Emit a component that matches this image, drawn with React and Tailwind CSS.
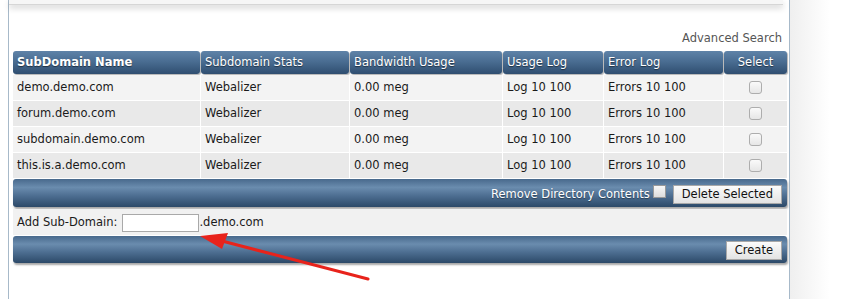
const rows = [
  "demo.demo.com",
  "forum.demo.com",
  "subdomain.demo.com",
  "this.is.a.demo.com",
];

const cols = "grid grid-cols-[187px_148px_152px_100px_119px_63px] gap-x-px";

const bar =
  "rounded-[3px] bg-[linear-gradient(to_bottom,#48698c_0%,#6a8cae_30%,#4d6e91_60%,#2c4968_100%)] shadow-[1px_2px_2px_rgba(0,0,0,0.35)]";

const head =
  "h-[23px] flex items-center px-1 rounded-[3px] text-white [text-shadow:0_1px_1px_rgba(0,0,0,0.5)] bg-[linear-gradient(to_bottom,#5f83a8_0%,#4a6d92_45%,#2f4e70_100%)] shadow-[1px_1px_1px_rgba(0,0,0,0.3)]";

function Box() {
  return (
    <span className="inline-block w-[13px] h-[13px] rounded-[3px] border border-[#adadad] bg-[linear-gradient(to_bottom,#fafafa,#e6e6e6)]" />
  );
}

function Btn({ children }) {
  return (
    <button className="h-[19px] px-2 border border-[#a8a8a8] bg-[linear-gradient(to_bottom,#fbfbfb,#e3e3e3)] text-[11.5px] text-[#111] leading-none">
      {children}
    </button>
  );
}

export default function App() {
  return (
    <div className="relative w-[856px] h-[299px] bg-white overflow-hidden font-['DejaVu_Sans',Verdana,sans-serif] text-[11.5px] text-[#1a1a1a]">
      {/* panel shadow on the right */}
      <div className="absolute left-[790px] top-0 w-[40px] h-full bg-[linear-gradient(to_right,#efefef,#ffffff)]" />

      <div className="absolute left-[8px] top-0 w-[782px] h-full border-x border-[#a7b9c9] bg-white">
        {/* top box with shadow */}
        <div className="h-[5px] mr-[6px] bg-[#f6f6f6] border-b border-[#d6d6d6] shadow-[0_3px_6px_rgba(0,0,0,0.18)]" />

        <div className="pl-[4px] pr-[2px]">
          <div className="h-[46px] flex items-end justify-end pr-[5px] pb-[4px] text-[#555]">
            Advanced Search
          </div>

          <div className={cols}>
            <div className={head + " font-bold"}>SubDomain Name</div>
            <div className={head}>Subdomain Stats</div>
            <div className={head}>Bandwidth Usage</div>
            <div className={head}>Usage Log</div>
            <div className={head}>Error Log</div>
            <div className={head + " justify-center"}>Select</div>
          </div>

          <div className="flex flex-col gap-y-px pt-px">
            {rows.map((r, i) => (
              <div key={r} className={cols + " h-[25px]"}>
                {[r, "Webalizer", "0.00 meg", "Log 10 100", "Errors 10 100"].map((t, j) => (
                  <div
                    key={j}
                    className={
                      "flex items-center px-1 pt-px " + (i % 2 ? "bg-[#e9e9e9]" : "bg-[#f3f3f3]")
                    }
                  >
                    {t}
                  </div>
                ))}
                <div
                  className={
                    "flex items-center justify-center " + (i % 2 ? "bg-[#e9e9e9]" : "bg-[#f3f3f3]")
                  }
                >
                  <Box />
                </div>
              </div>
            ))}
          </div>

          <div className={bar + " mt-px h-[28px] w-[774px] flex items-center justify-end pr-[5px] pt-[3px] gap-[7px]"}>
            <span className="text-white [text-shadow:0_1px_1px_rgba(0,0,0,0.4)]">
              Remove Directory Contents
            </span>
            <span className="-ml-[4px] -mt-[6px] inline-block w-[13px] h-[13px] border border-[#999] bg-[linear-gradient(to_bottom,#f8f8f8,#dcdcdc)]" />
            <Btn>Delete Selected</Btn>
          </div>

          <div className="mt-[2px] h-[26px] w-[774px] bg-[#f1f1f1] flex items-center pl-[4px] pt-px">
            <span>Add Sub-Domain:</span>
            <span className="ml-[5px] inline-block w-[77px] h-[18px] border border-[#a9a9a9] bg-white" />
            <span>.demo.com</span>
          </div>

          <div className={bar + " mt-px h-[27px] w-[774px] flex items-center justify-end pr-[5px] pt-[2px]"}>
            <Btn>Create</Btn>
          </div>
        </div>
      </div>

      {/* red arrow */}
      <svg className="absolute left-0 top-0" width="856" height="299">
        <line x1="368" y1="279" x2="222" y2="241" stroke="#e8231b" strokeWidth="3" strokeLinecap="round" />
        <polygon points="200,236 228,233 222,249" fill="#e8231b" />
      </svg>
    </div>
  );
}
